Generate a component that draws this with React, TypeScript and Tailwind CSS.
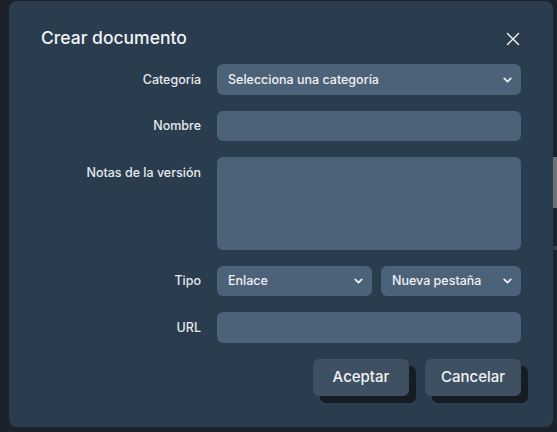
import { X, ChevronDown } from 'lucide-react';

const labelCls = "text-right text-[12.5px] font-medium text-[#e6e9ed]";
const fieldCls = "w-full rounded-[6px] bg-[#4c6278] text-[12.5px] font-medium text-[#eef1f4] outline-none";

const Select = ({ value, className = "" }: { value: string; className?: string }) => (
  <div className={`relative h-full ${className}`}>
    <div className={`${fieldCls} h-full flex items-center pl-[11px] pr-8 pt-[1px]`}>{value}</div>
    <ChevronDown size={13} strokeWidth={3.2} className="absolute right-[7px] top-1/2 -translate-y-1/2 text-[#eef1f4]" />
  </div>
);

const App = () => {
  return (
    <div
      className="w-[557px] h-[432px] bg-[#1b222b] flex overflow-hidden"
      style={{ fontFamily: 'Inter, "Noto Sans", sans-serif' }}
    >
      <div className="ml-[9px] mt-[1px] w-[544px] h-[426px] rounded-[8px] bg-[#2a3d4f] px-[32px] pt-[23px]">
        <div className="flex items-center justify-between h-[28px] mb-[12px]">
          <h2 className="text-[17.5px] font-medium text-[#f1f3f5]">Crear documento</h2>
          <X size={22} strokeWidth={1.5} className="text-[#f1f3f5] -mr-[3px] mt-[1px]" />
        </div>

        <div className="grid grid-cols-[160px_304px] gap-x-4 gap-y-4">
          <label className={`${labelCls} self-center pt-[1px]`}>Categoría</label>
          <div className="h-[31px]">
            <Select value="Selecciona una categoría" />
          </div>

          <label className={`${labelCls} self-center pt-[1px]`}>Nombre</label>
          <input className={`${fieldCls} h-[30px] px-3`} />

          <label className={`${labelCls} pt-[7px]`}>Notas de la versión</label>
          <textarea className={`${fieldCls} h-[93px] resize-none px-3 py-2`} />

          <label className={`${labelCls} self-center pt-[1px]`}>Tipo</label>
          <div className="flex gap-[9px] h-[30px]">
            <Select value="Enlace" className="w-[155px]" />
            <Select value="Nueva pestaña" className="w-[140px]" />
          </div>

          <label className={`${labelCls} self-center pt-[1px]`}>URL</label>
          <input className={`${fieldCls} h-[31px] px-3`} />
        </div>

        <div className="flex justify-end gap-4 mt-4">
          <button className="w-[96px] h-[37px] rounded-[6px] bg-[#3e5062] text-[15px] font-medium text-[#f1f3f5] shadow-[7px_7px_0_#151c23]">
            Aceptar
          </button>
          <button className="w-[96px] h-[37px] rounded-[6px] bg-[#3e5062] text-[15px] font-medium text-[#f1f3f5] shadow-[7px_7px_0_#151c23]">
            Cancelar
          </button>
        </div>
      </div>

      <div className="w-[4px] flex flex-col">
        <div className="h-[157px]" />
        <div className="h-[51px] bg-[#6c7177]" />
        <div className="h-[38px]" />
        <div className="h-[4px] bg-[#3a4048]" />
      </div>
    </div>
  );
};

export default App;
